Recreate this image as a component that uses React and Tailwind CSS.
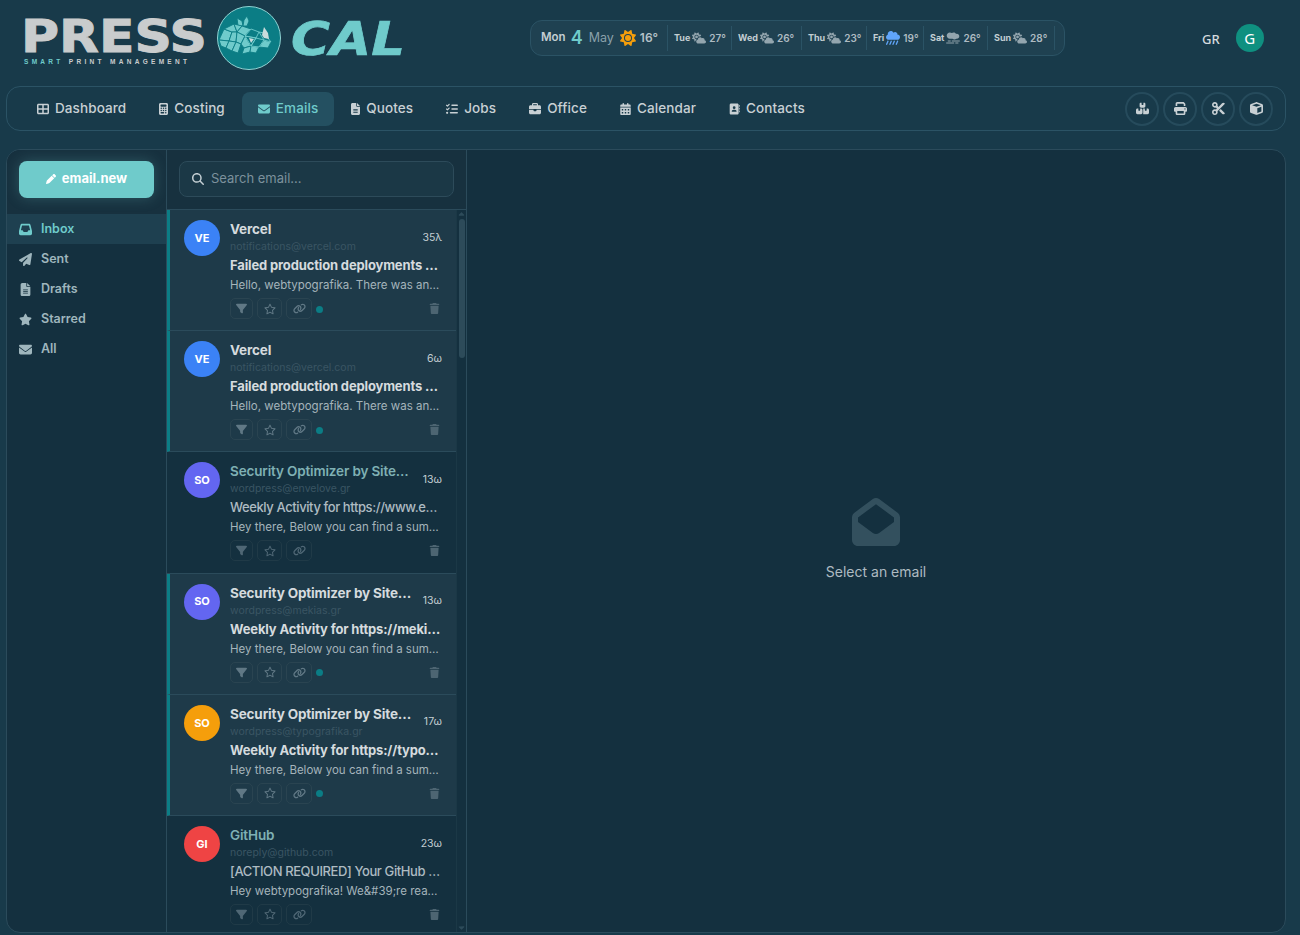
import React from "react";
import { FaTableCellsLarge, FaCalculator, FaEnvelope, FaFileLines, FaListCheck, FaBriefcase, FaCalendarDays, FaAddressBook, FaBoxesStacked, FaPrint, FaScissors, FaCube, FaPen, FaMagnifyingGlass, FaInbox, FaPaperPlane, FaStar, FaRegStar, FaFilter, FaLink, FaTrash, FaEnvelopeOpen, FaSun, FaCloudSun, FaCloudShowersHeavy, FaSmog, FaCaretUp, FaCaretDown } from "react-icons/fa6";

function Logo() {
  return (
    <div className="flex items-center">
      <svg viewBox="0 0 180 52" className="w-[180px] h-[52px] shrink-0 mt-[2px] overflow-visible">
        <text x="-3" y="39" textLength="186" lengthAdjust="spacingAndGlyphs" fontFamily="'DejaVu Sans', sans-serif" fontWeight="700" fontSize="44" fill="#c9cccd" stroke="#c9cccd" strokeWidth="0.9">PRESS</text>
        <text x="0" y="51" textLength="163" fontFamily="'Liberation Sans', sans-serif" fontWeight="700" fontSize="6.5" fill="#c9cccd"><tspan fill="#6fcbcb">SMART</tspan> PRINT MANAGEMENT</text>
      </svg>
      <svg viewBox="0 0 66 66" className="w-[66px] h-[66px] ml-[12px] shrink-0">
        <circle cx="33" cy="33" r="31.5" fill="#0b7d85" stroke="#8fd3d3" strokeWidth="1" />
        <g fill="#6fcbcb" stroke="#0b7d85" strokeWidth="0.9" strokeLinejoin="round">
          <path d="M22 21l-1-8 5 3 1 5z" />
          <path d="M27 21l1-6 3-4 2 5-2 5z" />
          <path d="M3 35l5-11 8 3-3 9z" />
          <path d="M8 24l10-5 3 8-5 0z" />
          <path d="M18 19l8 2-5 6z" />
          <path d="M26 21l9 3-6 7-8-4z" />
          <path d="M3 35l10 1-3 7-5-2z" />
          <path d="M13 36l3-9 5 0-1 10z" />
          <path d="M21 27l8 4-4 8-5-2z" />
          <path d="M10 43l3-7 7 1-4 9z" />
          <path d="M20 37l5 2-3 9-6-2z" />
          <path d="M25 39l4-8 6 10-7 2z" />
          <path d="M28 43l7-2-1 6-8 2z" />
          <path d="M35 41l8 1-3 6-6-1z" />
          <path d="M48 35l7 2-3 6-9-1z" />
        </g>
        <g fill="none" stroke="#6fcbcb" strokeWidth="0.9" strokeLinejoin="round">
          <path d="M35 24l8 3-3 6-11-2z" />
          <path d="M29 31l11 2-5 8z" />
          <path d="M40 33l8 2-5 7-8-1z" />
          <path d="M43 27l5 1 7 9-7-2z" />
        </g>
        <path d="M46 30l2-8 4 6 1 6-5-1z" fill="#c9dcdc" />
        <path d="M33 33l5 1-3 4z" fill="#c9dcdc" />
      </svg>
      <svg viewBox="0 0 110 36" className="w-[110px] h-[36px] ml-[11px] mt-[1px] shrink-0 overflow-visible">
        <text x="-2" y="33.5" textLength="114" lengthAdjust="spacingAndGlyphs" fontFamily="'DejaVu Sans', sans-serif" fontWeight="700" fontStyle="italic" fontSize="46" fill="#6fcbcb" stroke="#6fcbcb" strokeWidth="0.7">CAL</text>
      </svg>
    </div>
  );
}

const days = [
  ["Tue", FaCloudSun, "27°", "text-[#93a5ae]", "w-[64px]"],
  ["Wed", FaCloudSun, "26°", "text-[#93a5ae]", "w-[70px]"],
  ["Thu", FaCloudSun, "23°", "text-[#93a5ae]", "w-[65px]"],
  ["Fri", FaCloudShowersHeavy, "19°", "text-[#60a5fa]", "w-[57px]"],
  ["Sat", FaSmog, "26°", "text-[#93a5ae]", "w-[64px]"],
  ["Sun", FaCloudSun, "28°", "text-[#93a5ae]", "w-[67px]"],
];

function Weather() {
  return (
    <div className="flex items-center w-[535px] h-[36px] rounded-[12px] border border-[#2b5365] bg-[#1f4151] pl-[10px] shrink-0">
      <div className="flex items-center h-[26px] w-[127px] border-r border-[#2b5365] shrink-0">
        <span className="text-[11.5px] font-semibold text-[#c3ced3]">Mon</span>
        <span className="text-[18px] leading-none font-semibold text-[#6fcbcb] ml-[5px]">4</span>
        <span className="text-[12.5px] text-[#8aa0aa] ml-[6px]">May</span>
        <FaSun className="text-[16px] text-[#f59e0b] ml-[6px] shrink-0" />
        <span className="text-[12px] font-semibold text-[#b5c2c8] ml-[4px]">16°</span>
      </div>
      {days.map(([d, I, t, c, w]) => (
        <div key={d} className={"flex items-center h-[24px] border-r border-[#2b5365] pl-[6px] shrink-0 " + w}>
          <span className="text-[9px] font-bold text-[#c3ced3]">{d}</span>
          <I className={"text-[14px] ml-[2px] shrink-0 " + c} />
          <span className="text-[10px] font-semibold text-[#aebbc2] ml-[3px]">{t}</span>
        </div>
      ))}
    </div>
  );
}

const navItems = [
  ["Dashboard", FaTableCellsLarge, "w-[12px]"],
  ["Costing", FaCalculator, "w-[9px]"],
  ["Emails", FaEnvelope, "w-[12px]"],
  ["Quotes", FaFileLines, "w-[9px]"],
  ["Jobs", FaListCheck, "w-[12px]"],
  ["Office", FaBriefcase, "w-[12px]"],
  ["Calendar", FaCalendarDays, "w-[11px]"],
  ["Contacts", FaAddressBook, "w-[11px]"],
];

function Nav() {
  return (
    <div className="flex items-center justify-between h-[45px] w-[1280px] rounded-[14px] border border-[#2b5365] ml-[6px] pl-[14px] pr-[12px] shrink-0">
      <div className="flex items-center gap-[1px]">
        {navItems.map(([label, I, w]) => {
          const active = label === "Emails";
          return (
            <div key={label} className={"flex items-center px-[16px] gap-[6px] h-[34px] rounded-[8px] text-[13.5px] font-medium tracking-[0.1px] " + (active ? "bg-[#245061] text-[#6fcbcb]" : "text-[#c8d0d4]")}>
              <I className={"h-[12px] " + w} />
              <span>{label}</span>
            </div>
          );
        })}
      </div>
      <div className="flex items-center gap-[4px]">
        {[FaBoxesStacked, FaPrint, FaScissors, FaCube].map((I, i) => (
          <div key={i} className="flex items-center justify-center w-[34px] h-[34px] rounded-full border-2 border-[#264b5c] text-[#c8d0d4]">
            <I className="text-[13px]" />
          </div>
        ))}
      </div>
    </div>
  );
}

const folders = [
  ["Inbox", FaInbox, true],
  ["Sent", FaPaperPlane],
  ["Drafts", FaFileLines],
  ["Starred", FaStar],
  ["All", FaEnvelope],
];

function Sidebar() {
  return (
    <div className="w-[160px] shrink-0 border-r border-[#2b4b5b] flex flex-col">
      <div className="h-[64px] px-[12px] pt-[11px] bg-[#17313f] shrink-0">
        <div className="flex items-center justify-center gap-[6px] h-[37px] pb-[1px] rounded-[8px] bg-[#6fcbcb] text-white text-[13px] font-bold shadow-[0_0_14px_rgba(111,203,203,0.25)]">
          <FaPen className="text-[10px]" />
          <span>email.new</span>
        </div>
      </div>
      {folders.map(([label, I, active]) => (
        <div key={label} className={"flex items-center h-[30px] pl-[12px] text-[12.5px] font-semibold " + (active ? "bg-[#1e4050] text-[#6fcbcb]" : "text-[#9fb6bd]")}>
          <span className="w-[22px]"><I className="text-[13px]" /></span>
          <span>{label}</span>
        </div>
      ))}
    </div>
  );
}

const emails = [
  { n: "Vercel", a: "VE", c: "bg-[#3b82f6]", e: "notifications@vercel.com", t: "35λ", s: "Failed production deployments on the webtypografika team", p: "Hello, webtypografika. There was an issue deploying", u: true },
  { n: "Vercel", a: "VE", c: "bg-[#3b82f6]", e: "notifications@vercel.com", t: "6ω", s: "Failed production deployments on the webtypografika team", p: "Hello, webtypografika. There was an issue deploying", u: true },
  { n: "Security Optimizer by SiteGround", a: "SO", c: "bg-[#6366f1]", e: "wordpress@envelove.gr", t: "13ω", s: "Weekly Activity for https://www.envelove.gr", p: "Hey there, Below you can find a summary of your site", u: false },
  { n: "Security Optimizer by SiteGround", a: "SO", c: "bg-[#6366f1]", e: "wordpress@mekias.gr", t: "13ω", s: "Weekly Activity for https://mekias.gr", p: "Hey there, Below you can find a summary of your site", u: true },
  { n: "Security Optimizer by SiteGround", a: "SO", c: "bg-[#f59e0b]", e: "wordpress@typografika.gr", t: "17ω", s: "Weekly Activity for https://typografika.gr", p: "Hey there, Below you can find a summary of your site", u: true },
  { n: "GitHub", a: "GI", c: "bg-[#ef4444]", e: "noreply@github.com", t: "23ω", s: "[ACTION REQUIRED] Your GitHub account needs attention", p: "Hey webtypografika! We&#39;re reaching out to you today", u: false },
];

function Row({ m }) {
  const btn = "flex items-center justify-center h-[21px] rounded-[5px] border " + (m.u ? "border-[#2a4451] text-[#607885]" : "border-[#203a47] text-[#4f6775]");
  return (
    <div className={"h-[121.2px] border-b border-[#2b4b5b] flex pt-[10px] pr-[14px] " + (m.u ? "bg-[#1e3a49] border-l-[3px] border-l-[#0b7d85] pl-[14px]" : "pl-[17px]")}>
      <div className={"w-[36px] h-[36px] rounded-full shrink-0 flex items-center justify-center text-white text-[11px] font-bold " + m.c}>{m.a}</div>
      <div className="ml-[10px] flex-1 min-w-0">
        <div className="flex items-center justify-between">
          <div className="min-w-0">
            <div className={"text-[13.5px] leading-[18px] tracking-[-0.15px] truncate max-w-[182px] " + (m.u ? "font-bold text-[#d5dbde]" : "font-semibold text-[#7fb0b4]")}>{m.n}</div>
            <div className="text-[10.5px] leading-[16px] mt-[1px] text-[#3a5563] truncate">{m.e}</div>
          </div>
          <div className="text-[10.5px] text-[#c3ced3] shrink-0 ml-[8px]">{m.t}</div>
        </div>
        <div className={"text-[13px] leading-[20px] truncate " + (m.u ? "font-bold tracking-[-0.15px] text-[#d5dbde]" : "font-medium tracking-[-0.4px] text-[#aebbc2]")}>{m.s}</div>
        <div className="text-[11.5px] leading-[20px] text-[#a5b4bb] truncate pr-[1px]">{m.p}</div>
        <div className="flex items-center mt-[3px]">
          <div className={btn + " w-[23px]"}><FaFilter className="text-[11px]" /></div>
          <div className={btn + " w-[25px] ml-[4px]"}><FaRegStar className="text-[12px]" /></div>
          <div className={btn + " w-[26px] ml-[4px]"}><FaLink className="text-[13px]" /></div>
          {m.u && <span className="w-[7px] h-[7px] rounded-full bg-[#0b7d85] ml-[4px] mt-[1px]" />}
          <FaTrash className="text-[11px] text-[#4d6572] ml-auto mr-[2px]" />
        </div>
      </div>
    </div>
  );
}

function List() {
  return (
    <div className="w-[300px] shrink-0 border-r border-[#2b4b5b] flex flex-col min-h-0">
      <div className="h-[60px] shrink-0 border-b border-[#2b4b5b] px-[12px] pt-[11px] bg-[#17313f]">
        <div className="flex items-center h-[36px] rounded-[8px] border border-[#2d4b5a] bg-[#1b3846] pl-[12px] text-[13px] text-[#7c919c]">
          <FaMagnifyingGlass className="text-[12px] text-[#c3ced3] mr-[7px]" />
          <span>Search email...</span>
        </div>
      </div>
      <div className="flex flex-1 min-h-0 overflow-hidden">
        <div className="w-[289px] shrink-0">
          {emails.map((m, i) => <Row key={i} m={m} />)}
        </div>
        <div className="w-[10px] flex flex-col items-center justify-between text-[#2d4b5a] text-[9px] border-l border-[#1b3846]">
          <div className="flex flex-col items-center w-full">
            <FaCaretUp />
            <div className="w-[6px] h-[139px] rounded-full bg-[#2d4b5a]" />
          </div>
          <FaCaretDown />
        </div>
      </div>
    </div>
  );
}

export default function App() {
  return (
    <div className="h-[935px] w-[1300px] overflow-hidden bg-[#183a4a] text-white flex flex-col" style={{ fontFamily: "Inter, 'Noto Sans', sans-serif" }}>
      <div className="h-[86px] shrink-0 flex items-center pb-[10px]">
        <div className="ml-[24px] w-[506px] shrink-0"><Logo /></div>
        <Weather />
        <div className="ml-[137px] text-[13px] font-medium text-[#d5dbde] mt-[3px]" style={{ fontFamily: "'Noto Sans', sans-serif" }}>GR</div>
        <div className="ml-[16px] w-[28px] h-[28px] rounded-full bg-[#0f9080] flex items-center justify-center text-[15px] text-white" style={{ fontFamily: "'Noto Sans', sans-serif" }}>G</div>
      </div>
      <Nav />
      <div className="h-[784px] w-[1280px] shrink-0 mt-[18px] ml-[6px] rounded-[14px] border border-[#2b4b5b] bg-[#14303f] flex overflow-hidden">
        <Sidebar />
        <List />
        <div className="flex-1 flex flex-col items-center justify-center pb-[2px]">
          <FaEnvelopeOpen className="text-[48px] text-[#33505e]" />
          <div className="mt-[15px] text-[14px] text-[#aebbc2]">Select an email</div>
        </div>
      </div>
    </div>
  );
}
